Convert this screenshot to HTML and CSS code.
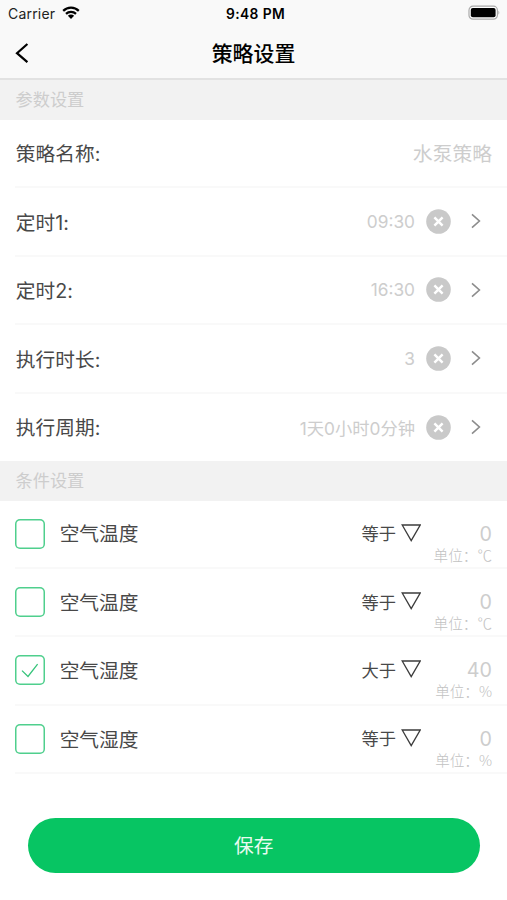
FILE: index.html
```
<!DOCTYPE html>
<html lang="zh-CN">
<head>
<meta charset="utf-8">
<title>策略设置</title>
<link rel="stylesheet" href="styles.css">
</head>
<body>
<svg class="symbols" width="0" height="0">
  <symbol id="clear" viewBox="0 0 25 25">
    <circle cx="12.5" cy="12.5" r="12.3" fill="#c9c9c9"/>
    <path d="M8.4 8.4l8.2 8.2M16.6 8.4l-8.2 8.2" stroke="#fff" stroke-width="2.5" fill="none"/>
  </symbol>
  <symbol id="arrow" viewBox="0 0 10 16">
    <path d="M1 1.4L8.4 8 1 14.6" stroke="#8c8c8c" stroke-width="1.6" fill="none"/>
  </symbol>
  <symbol id="triangle" viewBox="0 0 20 18">
    <path d="M1.2 1h18L10.2 16.6z" stroke="#3c3c3c" stroke-width="1.3" fill="none"/>
  </symbol>
</svg>

<header class="top">
  <div class="status">
    <div class="carrier">Carrier
      <svg width="18" height="14" viewBox="0 0 18 14">
        <path d="M1.2 4.9a11 11 0 0 1 15.6 0M4 7.9a7.1 7.1 0 0 1 10 0" stroke="#000" stroke-width="2.2" fill="none"/>
        <path d="M5.9 9.8a4.4 4.4 0 0 1 6.2 0L9 13z"/>
      </svg>
    </div>
    <div class="time">9:48 PM</div>
    <div class="battery">
      <svg width="32" height="16" viewBox="0 0 32 16">
        <rect x="1" y="1.2" width="28.4" height="13" rx="4" fill="#fff" stroke="#a9a9a9" stroke-width="1.2"/>
        <rect x="2.8" y="3.1" width="24.8" height="9.2" rx="2"/>
        <path d="M30.4 5.6q1.8 2.1 0 4.2z" fill="#a9a9a9"/>
      </svg>
    </div>
  </div>
  <nav class="nav">
    <svg class="back" width="14" height="20" viewBox="0 0 14 20"><path d="M12.4 1L2 10.2l10.4 9" stroke="#000" stroke-width="2.2" fill="none"/></svg>
    <h1 class="title">策略设置</h1>
  </nav>
</header>

<h2 class="section">参数设置</h2>
<div class="list params">
  <div class="row"><span class="label">策略名称:</span><span class="value name">水泵策略</span></div>
  <div class="row"><span class="label">定时1:</span><span class="value">09:30</span><svg class="clear"><use href="#clear"/></svg><svg class="arrow"><use href="#arrow"/></svg></div>
  <div class="row"><span class="label">定时2:</span><span class="value">16:30</span><svg class="clear"><use href="#clear"/></svg><svg class="arrow"><use href="#arrow"/></svg></div>
  <div class="row"><span class="label">执行时长:</span><span class="value">3</span><svg class="clear"><use href="#clear"/></svg><svg class="arrow"><use href="#arrow"/></svg></div>
  <div class="row"><span class="label">执行周期:</span><span class="value">1天0小时0分钟</span><svg class="clear"><use href="#clear"/></svg><svg class="arrow"><use href="#arrow"/></svg></div>
</div>

<h2 class="section conditions-title">条件设置</h2>
<div class="list">
  <div class="row">
    <span class="check"></span><span class="label">空气温度</span>
    <span class="operator"><span>等于</span><svg class="triangle"><use href="#triangle"/></svg></span>
    <div class="amount"><span class="number">0</span><span class="unit">单位：℃</span></div>
  </div>
  <div class="row">
    <span class="check"></span><span class="label">空气温度</span>
    <span class="operator"><span>等于</span><svg class="triangle"><use href="#triangle"/></svg></span>
    <div class="amount"><span class="number">0</span><span class="unit">单位：℃</span></div>
  </div>
  <div class="row">
    <span class="check"><svg width="18" height="15" viewBox="0 0 18 15"><path d="M1 7.6l6 5.9L16.6 1.2" stroke="#37c47b" stroke-width="1.3" fill="none"/></svg></span><span class="label">空气湿度</span>
    <span class="operator"><span>大于</span><svg class="triangle"><use href="#triangle"/></svg></span>
    <div class="amount"><span class="number">40</span><span class="unit">单位：%</span></div>
  </div>
  <div class="row">
    <span class="check"></span><span class="label">空气湿度</span>
    <span class="operator"><span>等于</span><svg class="triangle"><use href="#triangle"/></svg></span>
    <div class="amount"><span class="number">0</span><span class="unit">单位：%</span></div>
  </div>
</div>

<button class="save">保存</button>
</body>
</html>
```
FILE: styles.css
```
* {
    box-sizing: border-box;
}
body {
    margin: 0;
    background: #fff;
    color: #484848;
    font-family: Inter, "Noto Sans CJK SC", sans-serif;
    font-size: 19.7px;
}
svg {
    display: block;
    flex: none;
}
.symbols {
    position: absolute;
}

/* status bar and title */
.top {
    height: 80px;
    background: #f9f9f9;
    border-bottom: 2px solid #e2e2e2;
    color: #000;
}
.status {
    display: grid;
    grid-template-columns: 1fr auto 1fr;
    align-items: center;
    height: 26px;
    padding: 0 7px 0 8px;
    font-size: 14px;
}
.carrier {
    display: flex;
    align-items: center;
    gap: 7px;
    color: #222;
    letter-spacing: 0.2px;
}
.time {
    padding: 1px 0 0 3px;
    font-weight: 600;
    font-size: 13.8px;
    letter-spacing: 0.4px;
}
.battery {
    justify-self: end;
}
.nav {
    display: grid;
    grid-template-columns: 60px 1fr 60px;
    align-items: center;
    height: 54px;
}
.back {
    margin-left: 15px;
}
.title {
    margin: 0;
    padding-top: 2px;
    text-align: center;
    font-size: 20.9px;
    line-height: 30px;
    font-weight: 500;
}

.section {
    display: flex;
    align-items: center;
    height: 39.5px;
    margin: 0;
    padding: 0 0 2px 15.5px;
    background: #f2f2f2;
    color: #cdcdcd;
    font-size: 17.2px;
    font-weight: 400;
}
.conditions-title {
    height: 40px;
}

/* list rows */
.list {
    padding-left: 15px;
}
.row {
    display: flex;
    align-items: center;
    height: 68.4px;
    padding-right: 15px;
    border-bottom: 2px solid #f9f9f9;
}
.params .row {
    height: 68.5px;
}
.params .row:last-child {
    height: 67px;
    border-bottom: 0;
}
.label {
    flex: 1;
    padding: 0 0 1.5px 0.7px;
}
.params .label {
    padding-bottom: 0.5px;
    letter-spacing: 0.1px;
}
.value {
    color: #cdcdcd;
    font-size: 17.3px;
}
.name {
    padding-bottom: 1px;
    font-size: 19.8px;
}
.clear {
    width: 25px;
    height: 25px;
    margin-left: 11px;
}
.arrow {
    width: 10px;
    height: 16px;
    margin: 0 11px 0 20px;
}
.check {
    display: grid;
    place-items: center;
    width: 30px;
    height: 30px;
    margin-right: 14px;
    border-radius: 5px;
    box-shadow: inset 0 0 0 1.5px #4fcf8d;
}
.operator {
    display: flex;
    align-items: center;
    gap: 5px;
    padding-bottom: 2px;
    font-size: 17.3px;
}
.triangle {
    width: 20px;
    height: 18px;
}
.amount {
    display: flex;
    flex-direction: column;
    align-items: flex-end;
    width: 71px;
    padding-top: 18px;
    color: #cdcdcd;
}
.number {
    line-height: 25px;
}
.unit {
    margin-top: -1px;
    font-family: "Noto Sans CJK SC", sans-serif;
    font-size: 14.6px;
    font-weight: 300;
    line-height: 18px;
    color: #c2c2c2;
    white-space: nowrap;
}

.save {
    display: block;
    width: 452.5px;
    height: 55px;
    margin: 44px 0 0 27.5px;
    padding-bottom: 3px;
    border: 0;
    border-radius: 28px;
    background: #07c563;
    color: #e9fbf1;
    font: inherit;
}
```
